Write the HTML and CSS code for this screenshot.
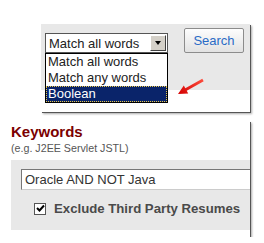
FILE: index.html
```html
<!DOCTYPE html>
<html lang="en">
<head>
<meta charset="UTF-8" />
<title>Keyword Search</title>
<link rel="stylesheet" href="styles.css">
</head>
<body>
<div class="search-panel">
  <div class="search-bar">
    <div class="select-wrap">
      <div class="select">
        <span>Match all words</span>
        <span class="select-btn"><span class="tri"></span></span>
      </div>
      <!-- open dropdown list -->
      <ul class="select-list">
        <li>Match all words</li>
        <li>Match any words</li>
        <li class="selected">Boolean</li>
      </ul>
    </div>
    <button class="search-btn">Search</button>
  </div>
  <div class="search-foot"></div>
  <svg class="pointer" width="30" height="20" viewBox="0 0 30 20">
    <defs>
      <linearGradient id="red" x1="0" y1="1" x2="1" y2="0">
        <stop offset="0" stop-color="#d40000" />
        <stop offset="1" stop-color="#ff5040" />
      </linearGradient>
    </defs>
    <path d="M26.3 1.7 L9.3 11.2 L7.8 8.6 L2 17 L12.2 16.4 L10.7 13.8 L27.7 4.3 Z" fill="url(#red)" />
  </svg>
</div>

<div class="keyword-panel">
  <h2 class="kw-title">Keywords</h2>
  <div class="kw-hint">(e.g. J2EE Servlet JSTL)</div>
  <div class="kw-box">
    <div class="kw-input">Oracle AND NOT Java</div>
    <label class="kw-check">
      <span class="checkbox"><svg width="9" height="9" viewBox="0 0 9 9"><path d="M1 4 L3.5 6.5 L8 1.5" stroke="#000" stroke-width="2" fill="none" /></svg></span>
      Exclude Third Party Resumes
    </label>
  </div>
</div>
</body>
</html>
```

FILE: styles.css
```css
body {
  margin: 0;
  background: #fff;
  font-family: "Liberation Sans", Arial, sans-serif;
  color: #222;
}

/* top panel with the open match dropdown */
.search-panel {
  position: relative;
  margin: 24px 0 0 41px;
  width: 209px;
  box-shadow: 1px 1px 0 #555, 2px 2px 2px #aaa;
}
.search-bar {
  display: flex;
  align-items: flex-start;
  gap: 16px;
  height: 66px;
  padding-left: 4px;
  background: #e8e8e8;
}
.search-foot {
  height: 22px;
  background: #fff;
}
.select-wrap {
  position: relative;
  margin-top: 9px;
}
.select {
  display: flex;
  align-items: center;
  justify-content: space-between;
  box-sizing: border-box;
  width: 123px;
  height: 20px;
  padding: 0 1px 0 3px;
  border: 1px solid #555;
  background: #fff;
  font-size: 13px;
}
.select-btn {
  display: flex;
  align-items: center;
  justify-content: center;
  box-sizing: border-box;
  width: 16px;
  height: 16px;
  background: #d4d0c8;
  border: 1px solid;
  border-color: #fff #404040 #404040 #fff;
}
.tri {
  width: 0;
  height: 0;
  border-left: 3px solid transparent;
  border-right: 3px solid transparent;
  border-top: 4px solid #000;
}
.select-list {
  position: absolute;
  left: 0;
  top: 20px;
  z-index: 5;
  box-sizing: border-box;
  width: 123px;
  margin: 0;
  padding: 0;
  list-style: none;
  border: 1px solid #000;
  background: #fff;
  font-size: 13px;
}
.select-list li {
  height: 16px;
  line-height: 16px;
  padding-left: 2px;
}
.select-list .selected {
  background: #0a246a;
  color: #fff;
  outline: 1px dotted #e8c84a;
  outline-offset: -1px;
}
.search-btn {
  width: 60px;
  height: 25px;
  margin-top: 4px;
  padding: 0;
  border: 1px solid #8c8c8c;
  border-radius: 2px;
  background: linear-gradient(#fdfdfd, #e2e2e2);
  color: #2a6bc6;
  font-family: inherit;
  font-size: 13px;
}
.pointer {
  position: absolute;
  left: 135px;
  top: 53px;
}

/* keywords panel */
.keyword-panel {
  margin: 9px 0 0 11px;
  width: 239px;
  overflow: hidden;
  padding-bottom: 7px;
  background: #fff;
  box-shadow: 1px 1px 0 #555, 2px 2px 2px #aaa;
}
.kw-title {
  margin: 0;
  padding-top: 2px;
  font-size: 15px;
  line-height: 18px;
  color: #7b0000;
}
.kw-hint {
  margin-top: 1px;
  font-size: 10.7px;
  line-height: 13px;
  color: #555;
}
.kw-box {
  margin-top: 5px;
  padding: 9px 0 14px 10px;
  background: #e8e8e8;
}
.kw-input {
  box-sizing: border-box;
  width: 260px;
  height: 21px;
  padding-left: 3px;
  line-height: 19px;
  border: 1px solid;
  border-color: #777 #ccc #ccc #777;
  background: #fff;
  font-size: 13px;
  color: #333;
}
.kw-check {
  display: flex;
  align-items: center;
  gap: 8px;
  margin: 11px 0 0 13px;
  white-space: nowrap;
  font-size: 13.2px;
  font-weight: bold;
  color: #4a4a4a;
}
.checkbox {
  display: flex;
  align-items: center;
  justify-content: center;
  box-sizing: border-box;
  width: 12px;
  height: 12px;
  border: 1px solid #555;
  background: #fff;
}
```
